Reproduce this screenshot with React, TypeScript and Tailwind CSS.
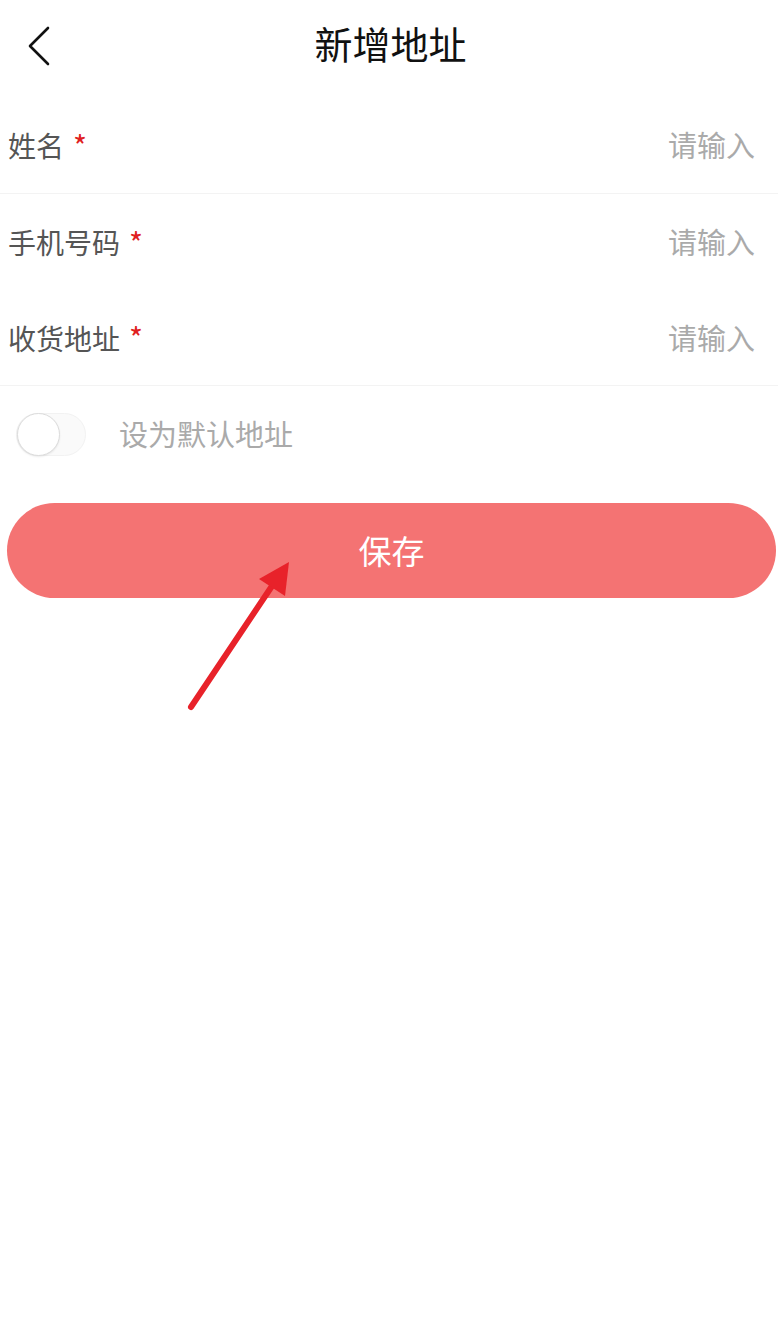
import React from "react";

function Row({ label, last }: { label: string; last?: boolean }) {
  return (
    <div className={`flex h-[96px] items-center justify-between pl-[8px] pr-[23px] ${last ? "border-b border-[#f3f3f3]" : ""}`}>
      <div className="flex items-center text-[28px] text-[#555555]">
        <span>{label}</span>
        <span className="ml-[9px] text-[30px] text-[#e02020]">*</span>
      </div>
      <span className="text-[29px] text-[#aaaaaa]">请输入</span>
    </div>
  );
}

export default function App() {
  return (
    <div
      className="relative h-[1342px] w-[778px] bg-white"
      style={{ fontFamily: '"Noto Sans CJK SC", "Noto Sans", sans-serif' }}
    >
      <div className="relative flex h-[97px] items-center justify-center">
        <svg className="absolute left-[24px] top-[24px]" width="32" height="46" viewBox="0 0 32 46">
          <path d="M24 4 L6 22 L24 40" fill="none" stroke="#111" strokeWidth="2.6" strokeLinecap="round" strokeLinejoin="round" />
        </svg>
        <span className="ml-[3px] pb-[12px] text-[38px] leading-none text-[#111]">新增地址</span>
      </div>
      <div className="border-b border-[#f3f3f3]">
        <Row label="姓名" />
      </div>
      <Row label="手机号码" />
      <Row label="收货地址" last />
      <div className="flex h-[96px] items-center">
        <div className="ml-[16px] flex h-[43px] w-[70px] items-center rounded-full border border-[#f2f2f2] bg-[#fafafa]">
          <div className="h-[43px] w-[43px] rounded-full border border-[#dcdcdc] bg-white shadow-[0_1px_2px_rgba(0,0,0,0.08)]" />
        </div>
        <span className="ml-[33px] text-[29px] text-[#aaaaaa]">设为默认地址</span>
      </div>
      <div className="mt-[21px] pl-[7px] pr-[2px]">
        <div className="flex h-[95px] items-center justify-center rounded-full bg-[#f47373]">
          <span className="text-[33px] text-white">保存</span>
        </div>
      </div>
      <svg className="absolute left-0 top-0" width="778" height="800" viewBox="0 0 778 800" style={{ pointerEvents: "none" }}>
        <line x1="191" y1="707" x2="276" y2="580" stroke="#e8222a" strokeWidth="6" strokeLinecap="round" />
        <polygon points="289,562 259,579 285,596" fill="#e8222a" />
      </svg>
    </div>
  );
}
